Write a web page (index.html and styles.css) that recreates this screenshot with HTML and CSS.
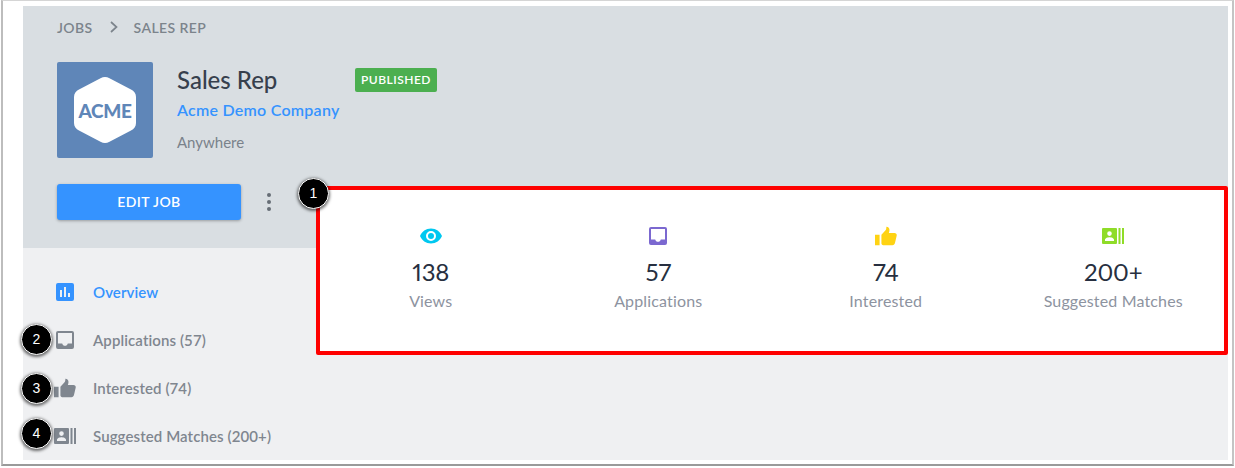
FILE: index.html
```html
<!DOCTYPE html>
<html lang="en">
<head>
<meta charset="utf-8">
<title>Sales Rep</title>
<link rel="stylesheet" href="styles.css">
</head>
<body>
<svg class="defs" width="0" height="0" aria-hidden="true">
  <symbol id="i-inbox" viewBox="0 0 18 18"><path fill-rule="evenodd" d="M2 0h14a2 2 0 0 1 2 2v14a2 2 0 0 1-2 2H2a2 2 0 0 1-2-2V2a2 2 0 0 1 2-2zM2 2v10.500h4.200c.4 1.400 1.500 2.300 2.800 2.300s2.400-.9 2.800-2.300H16V2z"/></symbol>
  <symbol id="i-thumb" viewBox="0 0 24 20"><path d="M0 8.500h5V20H0zM7 8.500 11.500 3.800c.6-.7.900-1.700.9-3.800 2.300 0 3.400 1.500 3.400 3.500 0 1-.3 2.400-.7 3.300h6.100c1.600 0 2.800 1.300 2.500 2.700l-1.900 8.200c-.3 1.300-1.300 2.300-2.800 2.300H9c-1.200 0-2-.9-2-2z"/></symbol>
  <symbol id="i-match" viewBox="0 0 22 16"><path fill-rule="evenodd" d="M1 0h13a1 1 0 0 1 1 1v14a1 1 0 0 1-1 1H1a1 1 0 0 1-1-1V1a1 1 0 0 1 1-1zM7.500 3.300a2.300 2.300 0 1 0 0 4.600 2.300 2.300 0 0 0 0-4.600zM3 13h9v-1.200c0-1.700-3-2.500-4.500-2.500S3 10.100 3 11.800z"/><path d="M16.500 0h2v16h-2zM20 0h2v16h-2z"/></symbol>
  <symbol id="i-eye" viewBox="0 0 22 15"><path fill-rule="evenodd" d="M11 0C6 0 1.800 3.100 0 7.500 1.800 11.900 6 15 11 15s9.200-3.100 11-7.500C20.200 3.100 16 0 11 0zm0 12.500a5 5 0 1 1 0-10 5 5 0 0 1 0 10zm0-8a3 3 0 1 0 0 6 3 3 0 0 0 0-6z"/></symbol>
</svg>
<div class="frame">
  <main class="panel">
    <header class="job-header">
      <nav class="crumbs">
        <span>JOBS</span>
        <svg class="chevron" viewBox="0 0 8 12"><path d="M1 1l5.500 5L1 11" fill="none" stroke="currentColor" stroke-width="1.700"/></svg>
        <span>SALES REP</span>
      </nav>
      <div class="job-main">
        <div class="logo">
          <svg class="logo-hex" viewBox="0 0 62 66"><path d="M31 0c1.500 0 3 .5 4.500 1.300L57 12.500c3 1.600 5 4 5 7.500v26c0 3.500-2 5.900-5 7.500L35.500 64.700c-3 1.600-6 1.600-9 0L5 53.500c-3-1.600-5-4-5-7.500V20c0-3.500 2-5.900 5-7.500L26.500 1.300C28 .5 29.500 0 31 0z" fill="#fff"/></svg>
          <span class="logo-text">ACME</span>
        </div>
        <div class="job-info">
          <div class="title-row">
            <h1 class="job-title">Sales Rep</h1>
            <span class="badge">PUBLISHED</span>
          </div>
          <a class="company">Acme Demo Company</a>
          <div class="location">Anywhere</div>
        </div>
      </div>
      <div class="actions">
        <button class="edit-btn">EDIT JOB</button>
        <span class="dots"><i></i><i></i><i></i></span>
      </div>
    </header>
    <section class="tabs">
      <ul class="nav">
        <li class="nav-item active">
          <svg class="nav-icon" viewBox="0 0 18 18"><path fill-rule="evenodd" d="M2 0h14a2 2 0 0 1 2 2v14a2 2 0 0 1-2 2H2a2 2 0 0 1-2-2V2a2 2 0 0 1 2-2zM4 7v7h2V7zM8 4v10h2V4zM12 10v4h2v-4z"/></svg>
          <span>Overview</span>
        </li>
        <li class="nav-item"><svg class="nav-icon"><use href="#i-inbox"/></svg><span>Applications (57)</span></li>
        <li class="nav-item"><svg class="nav-icon wide"><use href="#i-thumb"/></svg><span>Interested (74)</span></li>
        <li class="nav-item"><svg class="nav-icon wide short"><use href="#i-match"/></svg><span>Suggested Matches (200+)</span></li>
      </ul>
    </section>
  </main>
  <section class="stats">
    <div class="stat">
      <svg class="stat-icon eye"><use href="#i-eye"/></svg>
      <div class="stat-num">138</div>
      <div class="stat-label">Views</div>
    </div>
    <div class="stat">
      <svg class="stat-icon inbox"><use href="#i-inbox"/></svg>
      <div class="stat-num">57</div>
      <div class="stat-label">Applications</div>
    </div>
    <div class="stat">
      <svg class="stat-icon thumb"><use href="#i-thumb"/></svg>
      <div class="stat-num">74</div>
      <div class="stat-label">Interested</div>
    </div>
    <div class="stat">
      <svg class="stat-icon match"><use href="#i-match"/></svg>
      <div class="stat-num">200+</div>
      <div class="stat-label">Suggested Matches</div>
    </div>
  </section>
  <span class="callout c1">1</span>
  <span class="callout c2">2</span>
  <span class="callout c3">3</span>
  <span class="callout c4">4</span>
</div>
</body>
</html>
```
FILE: styles.css
```css
* { box-sizing: border-box; }
html, body { margin: 0; padding: 0; background: #fff; }
body { width: 1235px; height: 468px; overflow: hidden; font-family: "Lato", "Liberation Sans", sans-serif; }
.defs { position: absolute; }
.frame {
  position: relative;
  width: 1233px;
  height: 466px;
  margin-left: 1px;
  padding: 5px 4px 5px 20px;
  background: #fff;
  border: 1px solid #d5d5d5;
  border-left: 2px solid #bdbdbd;
  border-right: 2px solid #c4c4c4;
  border-bottom: 2px solid #9a9a9a;
}
.panel { width: 1205px; height: 454px; background: #eff0f2; display: flex; flex-direction: column; }
.job-header { height: 242px; background: #d9dee2; padding: 13px 0 0 34px; }
.crumbs { display: flex; align-items: center; height: 16px; font-size: 14px; font-weight: 600; color: #7c848c; letter-spacing: .4px; }
.chevron { width: 8px; height: 12px; margin: 0 16px 0 17px; }
.job-main { display: flex; margin-top: 27px; }
.logo { position: relative; width: 96px; height: 96px; background: #5f86b8; border-radius: 2px; display: flex; align-items: center; justify-content: center; }
.logo-hex { width: 62px; height: 66px; }
.logo-text { position: absolute; font-size: 19px; font-weight: 900; color: #5f86b8; letter-spacing: -.4px; }
.job-info { margin-left: 24px; }
.title-row { display: flex; align-items: center; height: 36px; }
.job-title { margin: 0; width: 178px; font-size: 24px; font-weight: 500; color: #37404d; line-height: 36px; }
.badge { width: 82px; height: 24px; line-height: 24px; text-align: center; background: #4caf50; border-radius: 2px; color: #fff; font-size: 12px; font-weight: 600; letter-spacing: .5px; }
.company { display: block; margin-top: 2px; font-size: 16px; line-height: 20px; font-weight: 600; color: #3593ff; letter-spacing: .25px; }
.location { margin-top: 13px; font-size: 15px; line-height: 18px; color: #7a828b; }
.actions { display: flex; align-items: center; margin-top: 26px; }
.edit-btn { width: 184px; height: 36px; border: 0; padding: 0 0 2px; background: #3593ff; border-radius: 3px; color: #fff; font: 600 14px "Lato", sans-serif; letter-spacing: .4px; box-shadow: 0 1px 3px rgba(0,0,0,.3); }
.dots { display: flex; flex-direction: column; gap: 3px; margin-left: 26px; }
.dots i { display: block; width: 4px; height: 4px; border-radius: 50%; background: #666d75; }
.tabs { flex: 1; padding: 20px 0 0 33px; }
.nav { list-style: none; margin: 0; padding: 0; }
.nav-item { display: flex; align-items: center; height: 48px; font-size: 15px; font-weight: 600; letter-spacing: .1px; color: #7f868f; fill: #7f868f; }
.nav-item.active { color: #3593ff; fill: #3593ff; }
.nav-item span { margin-left: 19px; }
.nav-icon { width: 18px; height: 18px; flex: none; }
.nav-icon.wide { width: 22px; height: 20px; margin-left: -2px; margin-right: -2px; }
.nav-icon.short { height: 16px; }
.stats {
  position: absolute;
  left: 313px;
  top: 185px;
  width: 912px;
  height: 169px;
  display: grid;
  grid-template-columns: repeat(4, 1fr);
  padding: 41px 1px 0;
  background: #fff;
  border-radius: 2px;
  border: 0;
  box-shadow: inset 0 0 0 4px #fe0000;
}
.stat { display: flex; flex-direction: column; align-items: center; }
.stat-icon { display: block; width: 22px; height: 18px; }
.eye { fill: #00c8f0; }
.inbox { width: 18px; fill: #7b68d0; }
.thumb { height: 20px; margin-top: -1px; margin-bottom: -1px; fill: #ffd313; }
.match { height: 16px; margin-top: 1px; margin-bottom: 1px; fill: #8fdc28; }
.stat-num { margin-top: 13px; font-size: 24px; line-height: 28px; letter-spacing: -.2px; color: #272f40; font-variant-numeric: proportional-nums; }
.stat-label { margin-top: 6px; font-size: 16px; line-height: 18px; letter-spacing: .15px; color: #8d93a0; }
.callout {
  position: absolute;
  width: 31px;
  height: 31px;
  border-radius: 50%;
  background: #000;
  border: 1px solid #fff;
  box-shadow: 0 1px 3px 1px rgba(0,0,0,.55);
  color: #fff;
  font: 14px/29px "Liberation Sans", sans-serif;
  text-align: center;
}
.c1 { left: 295px; top: 177px; }
.c2 { left: 18px; top: 323px; }
.c3 { left: 18px; top: 372px; }
.c4 { left: 18px; top: 417px; }
```
